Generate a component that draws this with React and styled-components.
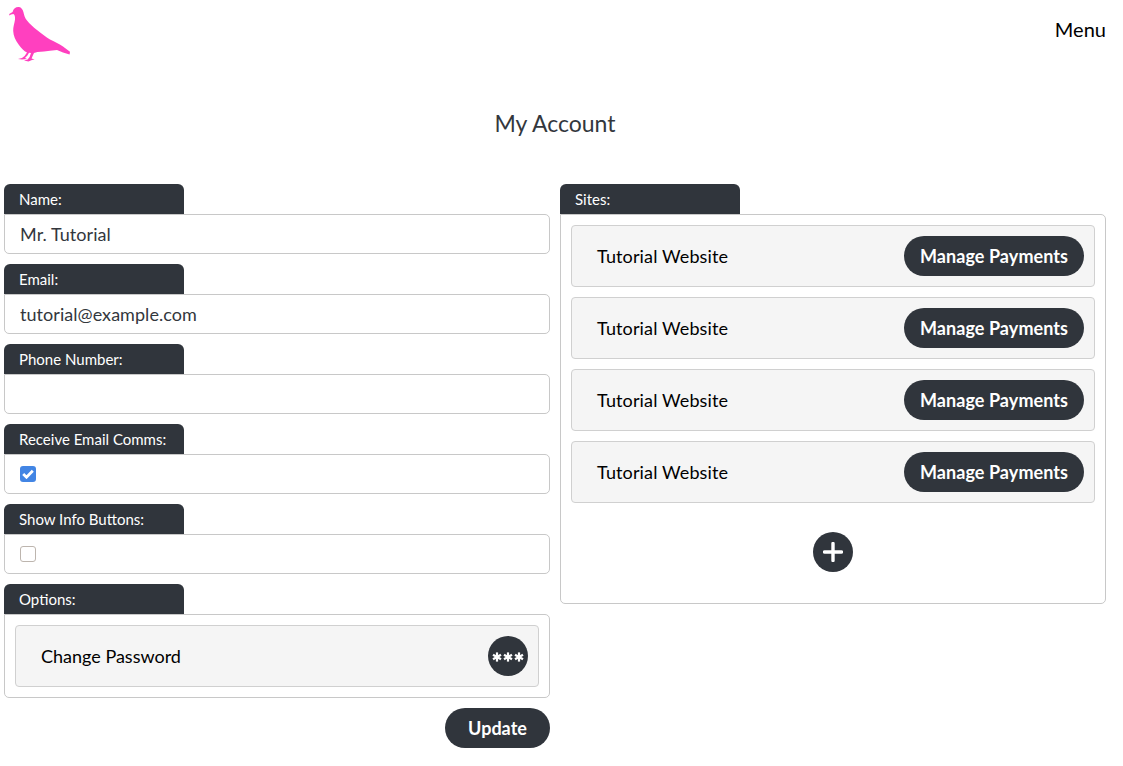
import React from 'react';
import styled, { createGlobalStyle } from 'styled-components';

const GlobalStyle = createGlobalStyle`
  html, body { margin: 0; padding: 0; background: #fff; }
  body { font-family: Lato, "Liberation Sans", sans-serif; color: #000; }
`;

const Pigeon = () => (
  <LogoSvg viewBox="8 6 64 58" aria-hidden="true">
    <path
      fill="#ff40bf"
      d="M9.2 14 L12.6 12 C13.4 8.8 15.6 7 18.4 7 C21 7 22.6 9 23.4 12 C24.2 15.6 25 18 27 20.6 C29.6 24 33 27 37 30 C41 33 46 37 50 39.6 C54 41.6 59 44 63 46.6 L70 51.8 L69.6 54.4 L63 52.6 L57 50 L50 50.8 L44 51.6 L37.4 52 L34 53 L32.6 56 L31.6 58.4 L34.6 59.4 L32 60 L28.4 61.6 L24 60.4 L27.6 59.6 L29.6 57 L31 53 L29 52.8 L27.4 55.4 L25 58 L27 59 L22 59.6 L18 59 L22 58 L24.6 56 L27 52.4 C24 51 21 48 18.6 44.4 C15.4 40 13.4 36 13.2 31 C13 27 14.6 23 15 19.6 C15.2 17 14.8 14.8 13.4 14 L11 14.4 L9.4 15.4 Z"
    />
  </LogoSvg>
);

const Asterisk = ({ x }) => (
  <g transform={`translate(${x} 9)`} stroke="#fff" strokeWidth="2.2">
    <circle r="2.2" fill="#fff" stroke="none" />
    <path d="M0 -4.6 V4.6" />
    <path d="M-4 -2.3 L4 2.3" />
    <path d="M-4 2.3 L4 -2.3" />
  </g>
);

const Field = ({ label, children }) => (
  <FieldWrap>
    <TabLabel>{label}</TabLabel>
    <FieldBox>{children}</FieldBox>
  </FieldWrap>
);

export default function App() {
  const sites = ['Tutorial Website', 'Tutorial Website', 'Tutorial Website', 'Tutorial Website'];
  return (
    <Page>
      <GlobalStyle />
      <Header>
        <Pigeon />
        <MenuLink>Menu</MenuLink>
      </Header>
      <Title>My Account</Title>
      <Columns>
        <Column>
          <Field label="Name:">
            <TextInput defaultValue="Mr. Tutorial" />
          </Field>
          <Field label="Email:">
            <TextInput defaultValue="tutorial@example.com" />
          </Field>
          <Field label="Phone Number:">
            <TextInput defaultValue="" />
          </Field>
          <Field label="Receive Email Comms:">
            <CheckBox $checked>
              <svg width="12" height="10" viewBox="0 0 12 10" aria-hidden="true">
                <path d="M1.2 5 L4.5 8.2 L10.8 1.8" fill="none" stroke="#fff" strokeWidth="2.8" />
              </svg>
            </CheckBox>
          </Field>
          <Field label="Show Info Buttons:">
            <CheckBox />
          </Field>
          <FieldWrap>
            <TabLabel>Options:</TabLabel>
            <ListBox>
              <ListRow>
                <RowName>Change Password</RowName>
                <RoundButton aria-label="Change Password">
                  <svg width="34" height="16" viewBox="0 0 34 16" aria-hidden="true">
                    <Asterisk x={6} />
                    <Asterisk x={17} />
                    <Asterisk x={28} />
                  </svg>
                </RoundButton>
              </ListRow>
            </ListBox>
          </FieldWrap>
          <Actions>
            <UpdateButton>Update</UpdateButton>
          </Actions>
        </Column>
        <Column>
          <FieldWrap>
            <TabLabel>Sites:</TabLabel>
            <SitesBox>
              {sites.map((site, index) => (
                <ListRow key={index}>
                  <SiteName>{site}</SiteName>
                  <ManageButton>Manage Payments</ManageButton>
                </ListRow>
              ))}
              <AddRow>
                <RoundButton aria-label="Add site">
                  <svg width="20" height="20" viewBox="0 0 20 20" aria-hidden="true">
                    <path d="M10 1.5 V18.5 M1.5 10 H18.5" stroke="#fff" strokeWidth="3.4" strokeLinecap="round" />
                  </svg>
                </RoundButton>
              </AddRow>
            </SitesBox>
          </FieldWrap>
        </Column>
      </Columns>
    </Page>
  );
}

const Page = styled.div`
  width: 1110px;
  height: 766px;
  overflow: hidden;
`;

const Header = styled.header`
  height: 70px;
  display: flex;
  justify-content: space-between;
  align-items: flex-start;
  padding: 6px 4px 0 8px;
  box-sizing: border-box;
`;

const LogoSvg = styled.svg`
  width: 64px;
  height: 58px;
  display: block;
`;

const MenuLink = styled.a`
  font-size: 20px;
  line-height: 24px;
  margin-top: 11px;
  color: #000;
`;

const Title = styled.h1`
  margin: 0;
  height: 114px;
  padding-top: 39px;
  box-sizing: border-box;
  text-align: center;
  font-size: 23px;
  line-height: 28px;
  font-weight: 400;
  color: #33373d;
`;

const Columns = styled.main`
  display: grid;
  grid-template-columns: 546px 546px;
  gap: 10px;
  padding: 0 4px;
  align-items: start;
`;

const Column = styled.section`
  display: flex;
  flex-direction: column;
  gap: 10px;
`;

const FieldWrap = styled.div`
  display: flex;
  flex-direction: column;
`;

const TabLabel = styled.div`
  width: 180px;
  height: 30px;
  box-sizing: border-box;
  padding: 6px 15px 0;
  background: #30353c;
  border-radius: 6px 6px 0 0;
  color: #fff;
  font-size: 15px;
  line-height: 18px;
`;

const FieldBox = styled.div`
  height: 40px;
  box-sizing: border-box;
  border: 1px solid #c8c8c8;
  border-radius: 0 5px 5px 5px;
  display: flex;
  align-items: center;
  padding: 0 15px;
  background: #fff;
`;

const TextInput = styled.input`
  width: 100%;
  border: 0;
  outline: 0;
  padding: 0;
  background: transparent;
  font-family: inherit;
  font-size: 18px;
  letter-spacing: 0.05px;
  color: #33373d;
`;

const CheckBox = styled.span`
  width: 16px;
  height: 16px;
  box-sizing: border-box;
  display: flex;
  align-items: center;
  justify-content: center;
  border-radius: 3px;
  background: ${(p) => (p.$checked ? '#4285e4' : '#fff')};
  border: ${(p) => (p.$checked ? '0' : '1px solid #bdb5ae')};
`;

const ListBox = styled.div`
  box-sizing: border-box;
  border: 1px solid #c8c8c8;
  border-radius: 0 5px 5px 5px;
  padding: 10px;
  display: flex;
  flex-direction: column;
  gap: 10px;
`;

const SitesBox = styled(ListBox)`
  height: 390px;
`;

const ListRow = styled.div`
  height: 62px;
  box-sizing: border-box;
  border: 1px solid #d0d0d0;
  border-radius: 4px;
  background: #f5f5f5;
  display: flex;
  align-items: center;
  justify-content: space-between;
  padding: 0 10px 0 25px;
`;

const RowName = styled.span`
  font-size: 18px;
  color: #000;
`;

const SiteName = styled(RowName)`
  letter-spacing: 0.13px;
`;

const PillButton = styled.button`
  height: 40px;
  padding: 0;
  border: 0;
  border-radius: 20px;
  background: #30353c;
  color: #fff;
  font-family: inherit;
  font-size: 18px;
  font-weight: 700;
`;

const ManageButton = styled(PillButton)`
  width: 180px;
  letter-spacing: 0.07px;
`;

const UpdateButton = styled(PillButton)`
  width: 105px;
`;

const RoundButton = styled.button`
  width: 40px;
  height: 40px;
  padding: 0;
  border: 0;
  border-radius: 50%;
  background: #30353c;
  color: #fff;
  display: flex;
  align-items: center;
  justify-content: center;
`;

const Actions = styled.div`
  display: flex;
  justify-content: flex-end;
`;

const AddRow = styled.div`
  display: flex;
  justify-content: center;
  padding-top: 19px;
`;
